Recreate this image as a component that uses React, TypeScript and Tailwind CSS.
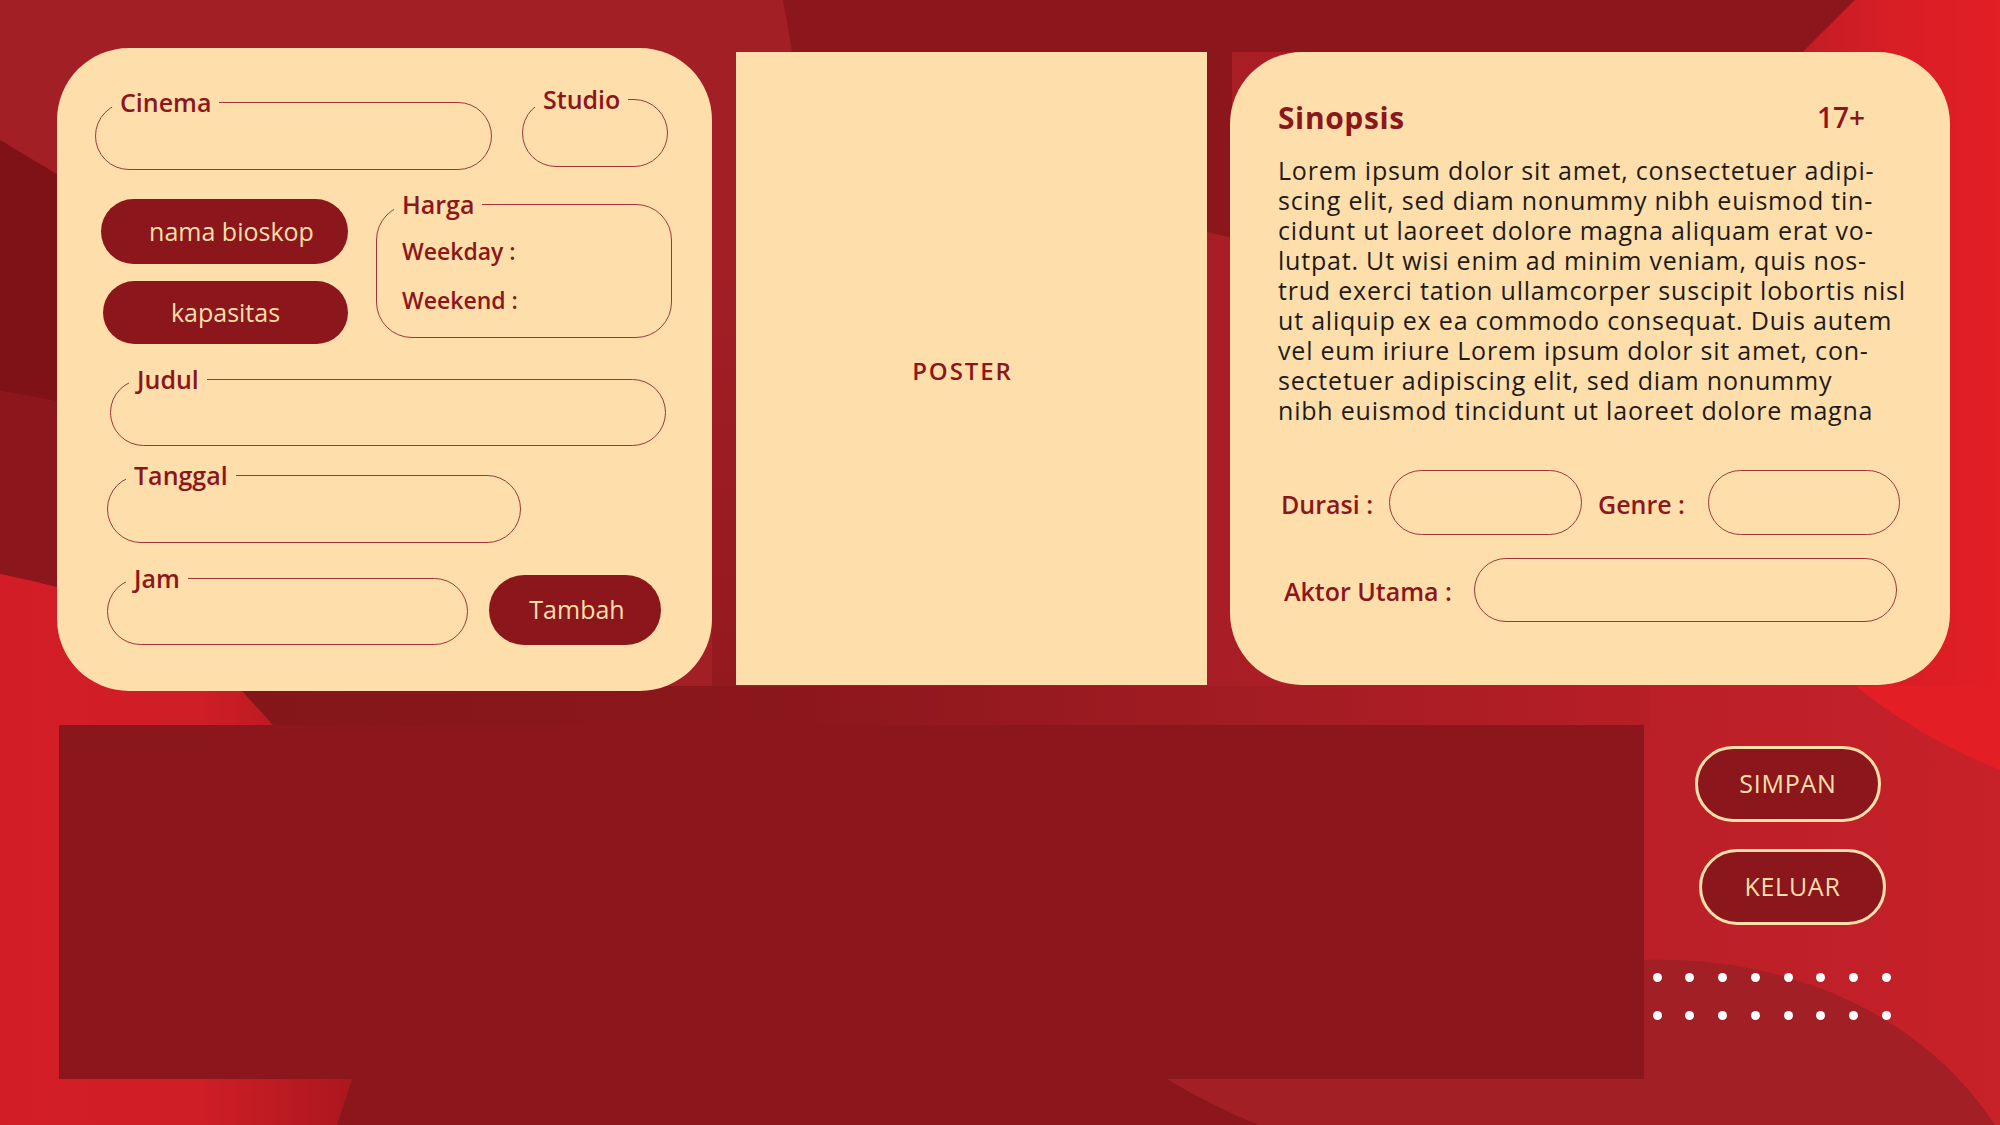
import React from "react";

const ink = "text-[#8b171c]";

function Background() {
  return (
    <svg className="absolute inset-0" width="2000" height="1125" viewBox="0 0 2000 1125">
      <defs>
        <linearGradient id="g-right" gradientUnits="userSpaceOnUse" x1="1200" y1="0" x2="2000" y2="0">
          <stop offset="0" stopColor="#a81d25" />
          <stop offset="1" stopColor="#c72129" />
        </linearGradient>
        <linearGradient id="g-mid" gradientUnits="userSpaceOnUse" x1="240" y1="0" x2="1650" y2="0">
          <stop offset="0" stopColor="#84161a" />
          <stop offset="0.4" stopColor="#8b171c" />
          <stop offset="0.7" stopColor="#a11c23" />
          <stop offset="1" stopColor="#b71e26" />
        </linearGradient>
        <linearGradient id="g-tr" gradientUnits="userSpaceOnUse" x1="1800" y1="0" x2="2000" y2="0">
          <stop offset="0" stopColor="#c21c24" />
          <stop offset="0.45" stopColor="#d81e26" />
          <stop offset="1" stopColor="#e31e25" />
        </linearGradient>
        <linearGradient id="g-bl" gradientUnits="userSpaceOnUse" x1="0" y1="0" x2="360" y2="0">
          <stop offset="0" stopColor="#d31d26" />
          <stop offset="0.55" stopColor="#cf1e26" />
          <stop offset="1" stopColor="#a9171d" />
        </linearGradient>
        <linearGradient id="g-gap" gradientUnits="userSpaceOnUse" x1="0" y1="250" x2="0" y2="700">
          <stop offset="0" stopColor="#a21f26" />
          <stop offset="1" stopColor="#93191f" />
        </linearGradient>
      </defs>
      <rect width="2000" height="1125" fill="#a21f26" />
      <rect x="1207" y="0" width="793" height="1125" fill="url(#g-right)" />
      <rect x="712" y="250" width="24" height="450" fill="url(#g-gap)" />
      <rect x="200" y="686" width="1450" height="45" fill="url(#g-mid)" />
      <path d="M300 1079 H1167 Q1210 1105 1259 1125 H300 Z" fill="#8b171c" />
      <path d="M1644 960 C1780 955 1920 1010 1995 1125 H1259 Q1210 1105 1167 1079 H1644 Z" fill="#a21f26" />
      <path d="M783 0 H1855 L1803 52 H1232 V238 L1207 232 V52 H792 Q788 26 783 0 Z" fill="#8b171c" />
      <path d="M1855 0 H2000 V770 Q1915 735 1856 686 L1800 650 V52 H1803 Z" fill="url(#g-tr)" />
      <path d="M1856 686 Q1915 735 2000 770 V686 Z" fill="#e31e25" />
      <path d="M0 140 Q30 158 60 176 V402 Q30 396 0 391 Z" fill="#7f1217" />
      <path d="M0 391 Q30 396 60 402 V588 Q30 580 0 574 Z" fill="#8b171c" />
      <path d="M0 574 Q30 580 60 588 L200 640 L242 691 L273 725 L340 1000 L352 1079 L337 1125 H0 Z" fill="url(#g-bl)" />
    </svg>
  );
}

function Field({ label, className, legendMl }: { label: string; className: string; legendMl: string }) {
  return (
    <fieldset className={`rounded-full border-[1.5px] border-[#a0363b] ${className}`}>
      <legend className={`px-[8px] text-[25px] font-semibold leading-[30px] ${ink} ${legendMl}`}>{label}</legend>
    </fieldset>
  );
}

function LeftCard() {
  return (
    <div className="flex h-[643px] w-[655px] shrink-0 flex-col rounded-[72px] bg-[#fedeaa] pl-[38px] pt-[36px]">
      <div className="flex items-start">
        <Field label="Cinema" className="mt-[3px] h-[83px] w-[397px]" legendMl="ml-[16px]" />
        <Field label="Studio" className="ml-[30px] h-[83px] w-[146px]" legendMl="ml-[12px]" />
      </div>

      <div className="mt-[19px] flex items-start">
        <div className="ml-[6px] mt-[10px] flex flex-col">
          <button className="flex h-[65px] w-[247px] items-center justify-center rounded-full bg-[#8b171c] pl-[14px] text-[25px] font-medium text-[#fedeaa]">
            nama bioskop
          </button>
          <button className="ml-[2px] mt-[17px] flex h-[63px] w-[245px] items-center justify-center rounded-full bg-[#8b171c] text-[25px] font-medium text-[#fedeaa]">
            kapasitas
          </button>
        </div>
        <fieldset className="ml-[28px] h-[149px] w-[296px] rounded-[36px] border-[1.5px] border-[#a0363b]">
          <legend className={`ml-[17px] px-[8px] text-[25px] font-semibold leading-[30px] ${ink}`}>Harga</legend>
          <div className={`flex flex-col gap-[19px] pl-[25px] pt-[17px] text-[23px] font-semibold leading-[30px] ${ink}`}>
            <span>Weekday :</span>
            <span>Weekend :</span>
          </div>
        </fieldset>
      </div>

      <Field label="Judul" className="ml-[15px] mt-[20px] h-[82px] w-[556px]" legendMl="ml-[18px]" />
      <Field label="Tanggal" className="ml-[12px] mt-[14px] h-[83px] w-[414px]" legendMl="ml-[18px]" />

      <div className="mt-[20px] flex items-start">
        <Field label="Jam" className="ml-[12px] h-[82px] w-[361px]" legendMl="ml-[18px]" />
        <button className="ml-[21px] mt-[12px] h-[70px] w-[172px] rounded-full bg-[#8b171c] pl-[4px] text-[25px] font-medium text-[#fedeaa]">
          Tambah
        </button>
      </div>
    </div>
  );
}

function Poster() {
  return (
    <div className="ml-[24px] mt-[4px] flex h-[633px] w-[471px] shrink-0 items-center justify-center bg-[#fedeaa] pr-[18px] pt-[5px]">
      <span className={`text-[24px] font-semibold tracking-[0.08em] ${ink}`}>POSTER</span>
    </div>
  );
}

const synopsis = [
  "Lorem ipsum dolor sit amet, consectetuer adipi-",
  "scing elit, sed diam nonummy nibh euismod tin-",
  "cidunt ut laoreet dolore magna aliquam erat vo-",
  "lutpat. Ut wisi enim ad minim veniam, quis nos-",
  "trud exerci tation ullamcorper suscipit lobortis nisl",
  "ut aliquip ex ea commodo consequat. Duis autem",
  "vel eum iriure Lorem ipsum dolor sit amet, con-",
  "sectetuer adipiscing elit, sed diam nonummy",
  "nibh euismod tincidunt ut laoreet dolore magna",
];

function RightCard() {
  const input = "rounded-full border-[1.5px] border-[#a0363b] bg-transparent outline-none";
  return (
    <div className="ml-[23px] mt-[4px] flex h-[633px] w-[720px] shrink-0 flex-col rounded-[72px] bg-[#fedeaa] pl-[48px] pt-[47px]">
      <div className={`flex h-[36px] items-center justify-between pr-[85px] ${ink}`}>
        <span className="text-[30px] font-bold tracking-[0.02em]">Sinopsis</span>
        <span className="text-[28px] font-semibold">17+</span>
      </div>

      <p className="mt-[20px] text-[25px] leading-[30px] tracking-[0.8px] text-[#1e1b1b]">
        {synopsis.map((l) => (
          <span key={l} className="block whitespace-nowrap">
            {l}
          </span>
        ))}
      </p>

      <div className={`mt-[45px] flex items-center text-[25px] font-semibold ${ink}`}>
        <span className="w-[111px] pl-[3px] pt-[5px]">Durasi :</span>
        <input className={`h-[65px] w-[193px] ${input}`} />
        <span className="ml-[16px] w-[110px] pt-[5px]">Genre :</span>
        <input className={`h-[65px] w-[192px] ${input}`} />
      </div>

      <div className={`mt-[23px] flex items-center text-[25px] font-semibold ${ink}`}>
        <span className="w-[196px] pl-[6px] pt-[4px]">Aktor Utama :</span>
        <input className={`h-[64px] w-[423px] ${input}`} />
      </div>
    </div>
  );
}

function Dots() {
  return (
    <div className="ml-[0.5px] mt-[48px] flex flex-col gap-[29px]">
      {[0, 1].map((r) => (
        <div key={r} className="flex gap-[23.8px]">
          {Array.from({ length: 8 }).map((_, i) => (
            <span key={i} className="size-[9px] rounded-full bg-white" />
          ))}
        </div>
      ))}
    </div>
  );
}

export default function App() {
  return (
    <div
      className="relative h-[1125px] w-[2000px] overflow-hidden bg-[#a21f26]"
      style={{ fontFamily: '"Open Sans", "Noto Sans", sans-serif' }}
    >
      <Background />
      <div className="relative flex flex-col pl-[57px] pt-[48px]">
        <div className="flex items-start">
          <LeftCard />
          <Poster />
          <RightCard />
        </div>

        <div className="mt-[34px] flex items-start">
          <div className="ml-[2px] h-[354px] w-[1585px] bg-[#8b171c]" />
          <div className="ml-[8px] flex flex-col">
            <button className="ml-[43px] mt-[21px] h-[76px] w-[186px] rounded-full border-[3px] border-[#fedeaa] bg-[#8b171c] text-[25px] font-medium tracking-[0.03em] text-[#fedeaa]">
              SIMPAN
            </button>
            <button className="ml-[47px] mt-[27px] h-[76px] w-[187px] rounded-full border-[3px] border-[#fedeaa] bg-[#8b171c] text-[25px] font-medium tracking-[0.03em] text-[#fedeaa]">
              KELUAR
            </button>
            <Dots />
          </div>
        </div>
      </div>
    </div>
  );
}
